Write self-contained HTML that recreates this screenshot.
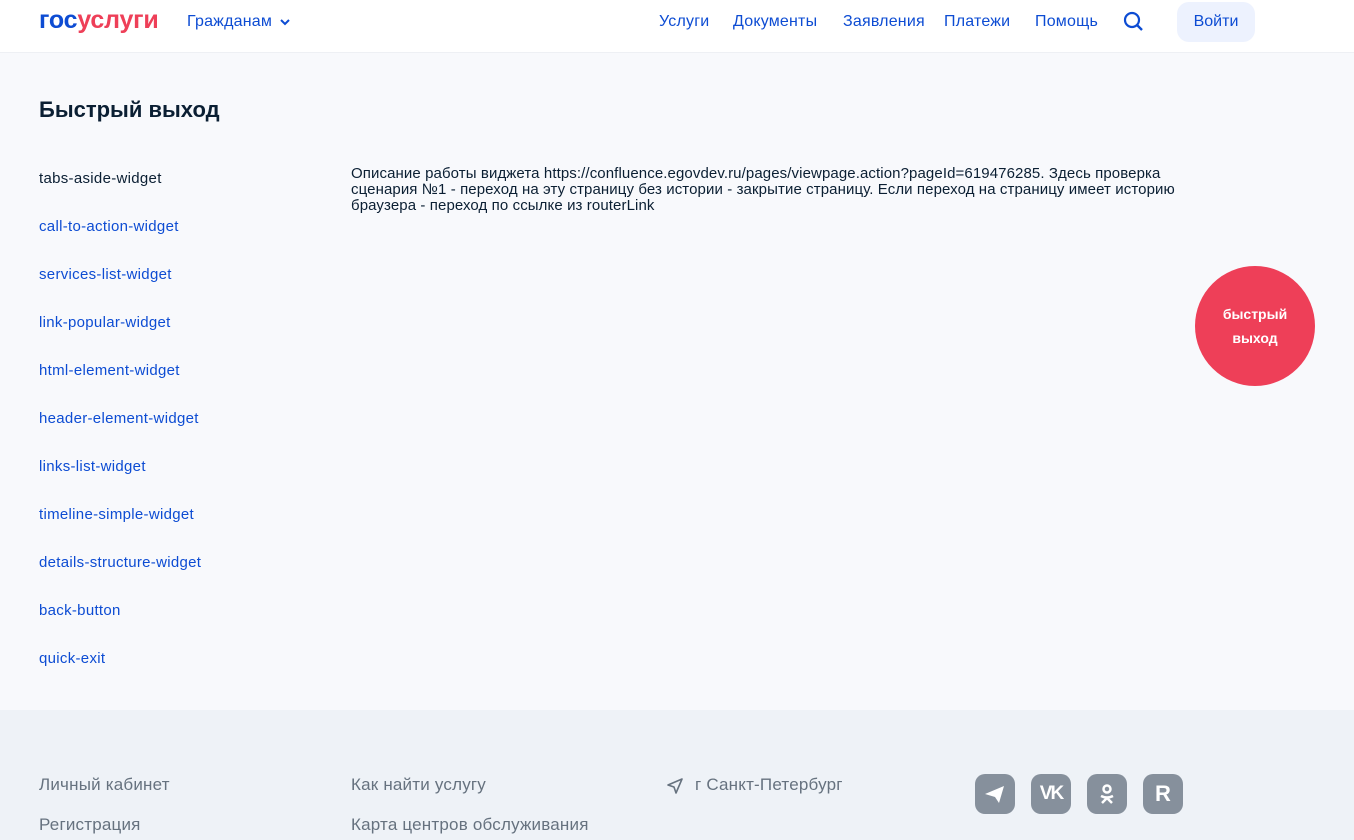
<!DOCTYPE html>
<html><head><meta charset="utf-8"><style>
*{margin:0;padding:0;box-sizing:border-box}
body{width:1354px;height:840px;overflow:hidden;background:#f8f9fc;font-family:"Liberation Sans",sans-serif;position:relative}
.hdr{position:absolute;left:0;top:0;width:1354px;height:53px;background:#fff;border-bottom:1px solid #eef0f4}
.logo{position:absolute;left:39px;top:6px;font-size:25px;font-weight:bold;letter-spacing:-0.2px}
.nav a{position:absolute;top:13px;font-size:16px;color:#0d4cd3;text-decoration:none;letter-spacing:0.2px}
.btn{position:absolute;left:1177px;top:2px;width:78px;height:40px;background:#edf2fe;border-radius:12px;color:#0d4cd3;font-size:16px;text-align:center;line-height:40px}
h1{position:absolute;left:39px;top:97px;font-size:22px;font-weight:bold;color:#0b1f33}
.side a{position:absolute;left:39px;font-size:15px;color:#0d4cd3;text-decoration:none;letter-spacing:0.3px}
.desc{position:absolute;left:351px;top:166px;width:865px;font-size:15px;line-height:16px;color:#0b1f33;letter-spacing:0.1px}
.qe{position:absolute;left:1195px;top:266px;width:120px;height:120px;border-radius:50%;background:#ee3f58;color:#fff;font-weight:bold;font-size:14px;text-align:center;padding-top:36px;line-height:24px}
.ft{position:absolute;left:0;top:710px;width:1354px;height:130px;background:#eef2f7}
.ft span{position:absolute;font-size:17px;color:#66727f;letter-spacing:0.2px}
.ic{position:absolute;top:774px;width:40px;height:40px;border-radius:10px;background:#86909c}
</style></head><body>
<div class="hdr">
<div class="logo"><span style="color:#0d4cd3">гос</span><span style="color:#ee3f58">услуги</span></div>
<div class="nav">
<a style="left:187px">Гражданам</a>
<svg style="position:absolute;left:279px;top:18px" width="12" height="8" viewBox="0 0 12 8"><path d="M2 2l4 4 4-4" stroke="#0d4cd3" stroke-width="2" fill="none"/></svg>
<a style="left:659px">Услуги</a><a style="left:733px">Документы</a><a style="left:843px">Заявления</a><a style="left:944px">Платежи</a><a style="left:1035px">Помощь</a>
</div>
<svg style="position:absolute;left:1122px;top:10px" width="24" height="24" viewBox="0 0 24 24"><circle cx="10" cy="10" r="7" stroke="#0d4cd3" stroke-width="2.2" fill="none"/><path d="M15 15l5 5" stroke="#0d4cd3" stroke-width="2.4"/></svg>
<div class="btn">Войти</div>
</div>
<h1>Быстрый выход</h1>
<div class="side">
<a style="top:170px;color:#0b1f33">tabs-aside-widget</a>
<a style="top:218px">call-to-action-widget</a>
<a style="top:266px">services-list-widget</a>
<a style="top:314px">link-popular-widget</a>
<a style="top:362px">html-element-widget</a>
<a style="top:410px">header-element-widget</a>
<a style="top:458px">links-list-widget</a>
<a style="top:506px">timeline-simple-widget</a>
<a style="top:554px">details-structure-widget</a>
<a style="top:602px">back-button</a>
<a style="top:650px">quick-exit</a>
</div>
<div class="desc">Описание работы виджета https://confluence.egovdev.ru/pages/viewpage.action?pageId=619476285. Здесь проверка сценария №1 - переход на эту страницу без истории - закрытие страницу. Если переход на страницу имеет историю браузера - переход по ссылке из routerLink</div>
<div class="qe">быстрый<br>выход</div>
<div class="ft">
<span style="left:39px;top:65px">Личный кабинет</span>
<span style="left:39px;top:105px">Регистрация</span>
<span style="left:351px;top:65px">Как найти услугу</span>
<span style="left:351px;top:105px">Карта центров обслуживания</span>
<svg style="position:absolute;left:666px;top:67px" width="18" height="18" viewBox="0 0 18 18"><path d="M16 2L2 8l6 2 2 6z" stroke="#66727f" stroke-width="1.6" fill="none" stroke-linejoin="round"/></svg>
<span style="left:695px;top:65px">г Санкт-Петербург</span>
</div>
<div class="ic" style="left:975px"><svg width="40" height="40" viewBox="0 0 40 40"><path d="M10 20l19-8-5 17-4-6z" fill="#fff"/></svg></div>
<div class="ic" style="left:1031px"><div style="color:#fff;font-weight:bold;font-size:19px;text-align:center;line-height:40px;letter-spacing:-2px">VK</div></div>
<div class="ic" style="left:1087px"><svg width="40" height="40" viewBox="0 0 40 40"><circle cx="20" cy="15" r="3.5" stroke="#fff" stroke-width="2.5" fill="none"/><path d="M14 22q6 3 12 0M20 24l-5 5M20 24l5 5" stroke="#fff" stroke-width="2.5" fill="none"/></svg></div>
<div class="ic" style="left:1143px"><div style="color:#fff;font-weight:bold;font-size:22px;text-align:center;line-height:40px">R</div></div>
</body></html>
